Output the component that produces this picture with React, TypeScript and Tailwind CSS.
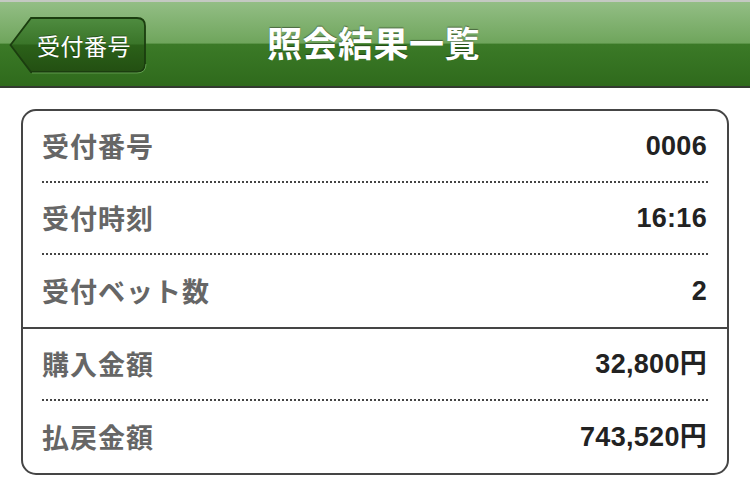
const rows = [
  [
    { label: "受付番号", value: "0006" },
    { label: "受付時刻", value: "16:16" },
    { label: "受付ベット数", value: "2" },
  ],
  [
    { label: "購入金額", value: "32,800円" },
    { label: "払戻金額", value: "743,520円" },
  ],
];

function BackButton() {
  return (
    <button className="relative ml-[9px] mt-[14px] h-[58px] w-[138px] shrink-0">
      <svg className="absolute inset-0" width="138" height="58" viewBox="0 0 138 58">
        <defs>
          <linearGradient id="btn" x1="0" y1="0" x2="0" y2="1">
            <stop offset="0" stopColor="#4f8c40" />
            <stop offset="0.48" stopColor="#3a7529" />
            <stop offset="0.5" stopColor="#2b6119" />
            <stop offset="1" stopColor="#234f12" />
          </linearGradient>
        </defs>
        <path
          d="M1.5 29 L22 2 H128 Q136 2 136 10 V48 Q136 56 128 56 H22 Z"
          fill="url(#btn)"
          stroke="#1b3d0f"
          strokeWidth="1.8"
        />
        <path d="M23 57 H128 Q137 57 137 48" fill="none" stroke="#5f9a4c" strokeWidth="1" />
      </svg>
      <span className="relative block pl-[28px] pr-[4px] text-left font-['Noto_Sans_CJK_JP',sans-serif] text-[23px] leading-[58px] tracking-[0.5px] text-white [text-shadow:0_-1px_0_rgba(0,0,0,0.35)]">
        受付番号
      </span>
    </button>
  );
}

export default function App() {
  return (
    <div className="h-[488px] w-[750px] overflow-hidden bg-white">
      <header className="flex h-[88px] border-t-2 border-b-2 border-t-[#c4c9c2] border-b-[#333a30] bg-[linear-gradient(to_bottom,#93be85_0%,#6fa55c_49%,#3b7a27_50%,#2f6a1c_100%)]">
        <BackButton />
        <h1 className="ml-[120px] mt-[16px] font-['Noto_Sans_CJK_JP',sans-serif] text-[35px] font-bold leading-[48px] tracking-[0.5px] text-white [text-shadow:0_-1px_1px_rgba(0,0,0,0.4)]">
          照会結果一覧
        </h1>
      </header>

      <div className="mx-[21px] mt-[21px] overflow-hidden rounded-[15px] border-2 border-[#454545]">
        {rows.map((group, gi) => (
          <div key={gi} className={gi > 0 ? "border-t-2 border-[#454545]" : ""}>
            {group.map((r, i) => (
              <div
                key={r.label}
                className={
                  "mx-[19px] flex h-[72px] items-center justify-between " +
                  (i < group.length - 1 ? "border-b-2 border-dotted border-[#454545]" : "h-[70px]")
                }
              >
                <span className="font-['Noto_Sans_CJK_JP',sans-serif] text-[27px] font-bold tracking-[1px] text-[#666666]">
                  {r.label}
                </span>
                <span className="mr-[1px] font-['Liberation_Sans','Noto_Sans_CJK_JP',sans-serif] text-[27px] font-bold tracking-[0.3px] text-[#222222]">
                  {r.value}
                </span>
              </div>
            ))}
          </div>
        ))}
      </div>
    </div>
  );
}
